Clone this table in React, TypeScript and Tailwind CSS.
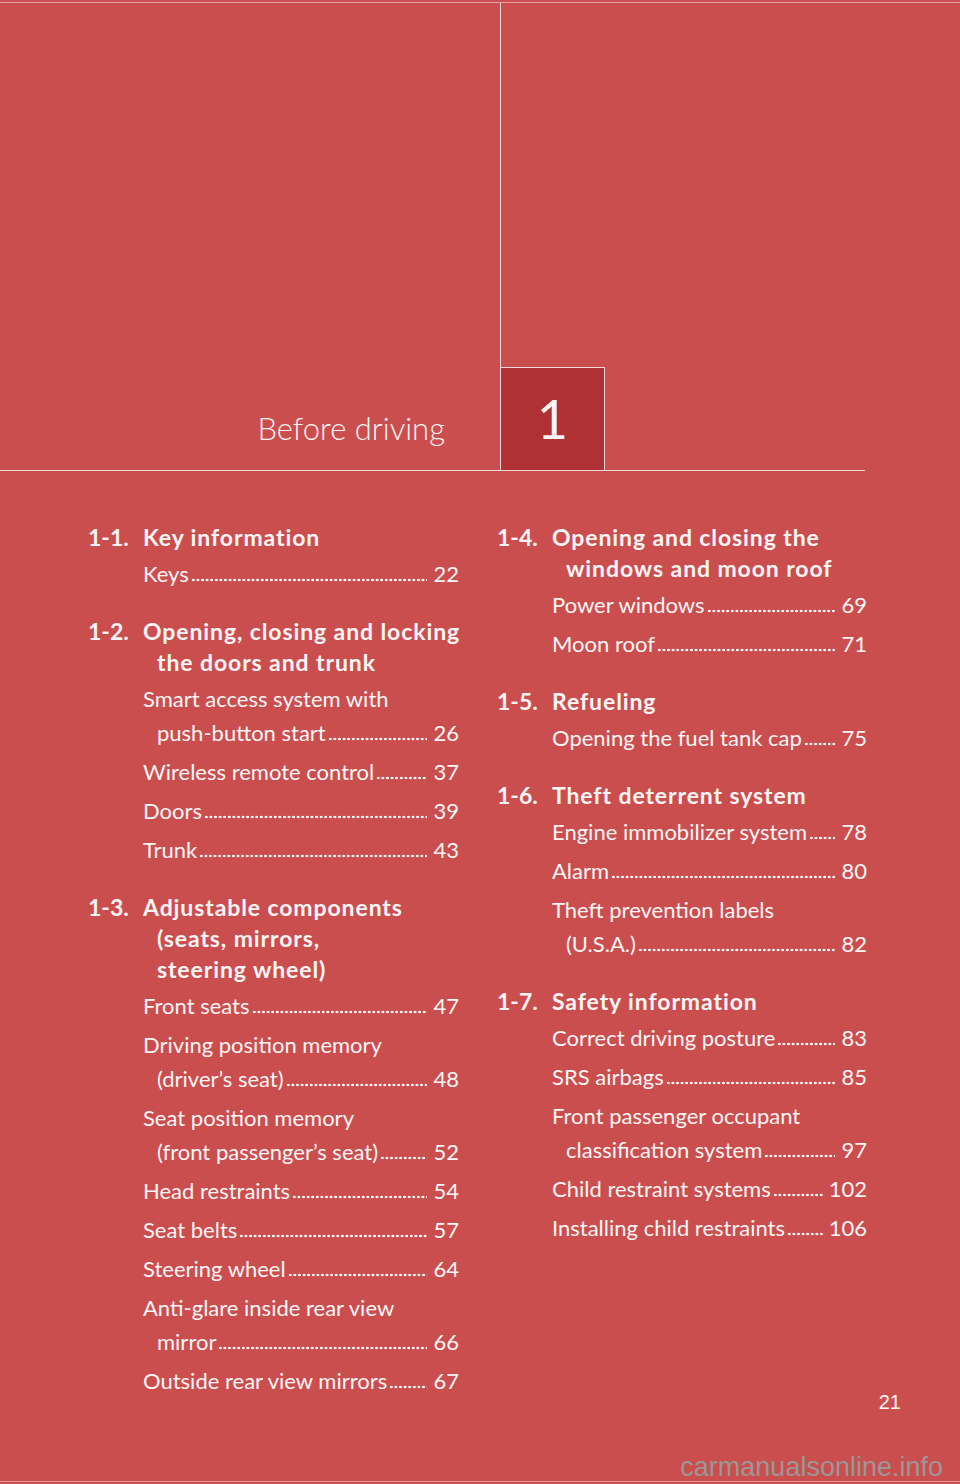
import React from 'react';

type Entry = { lines: string[]; page: string };
type Section = { num: string; title: string[]; entries: Entry[] };

const left: Section[] = [
  { num: '1-1.', title: ['Key information'], entries: [{ lines: ['Keys'], page: '22' }] },
  {
    num: '1-2.',
    title: ['Opening, closing and locking', 'the doors and trunk'],
    entries: [
      { lines: ['Smart access system with', 'push-button start'], page: '26' },
      { lines: ['Wireless remote control'], page: '37' },
      { lines: ['Doors'], page: '39' },
      { lines: ['Trunk'], page: '43' },
    ],
  },
  {
    num: '1-3.',
    title: ['Adjustable components', '(seats, mirrors,', 'steering wheel)'],
    entries: [
      { lines: ['Front seats'], page: '47' },
      { lines: ['Driving position memory', '(driver\u2019s seat)'], page: '48' },
      { lines: ['Seat position memory', '(front passenger\u2019s seat)'], page: '52' },
      { lines: ['Head restraints'], page: '54' },
      { lines: ['Seat belts'], page: '57' },
      { lines: ['Steering wheel'], page: '64' },
      { lines: ['Anti-glare inside rear view', 'mirror'], page: '66' },
      { lines: ['Outside rear view mirrors'], page: '67' },
    ],
  },
];

const right: Section[] = [
  {
    num: '1-4.',
    title: ['Opening and closing the', 'windows and moon roof'],
    entries: [
      { lines: ['Power windows'], page: '69' },
      { lines: ['Moon roof'], page: '71' },
    ],
  },
  { num: '1-5.', title: ['Refueling'], entries: [{ lines: ['Opening the fuel tank cap'], page: '75' }] },
  {
    num: '1-6.',
    title: ['Theft deterrent system'],
    entries: [
      { lines: ['Engine immobilizer system'], page: '78' },
      { lines: ['Alarm'], page: '80' },
      { lines: ['Theft prevention labels', '(U.S.A.)'], page: '82' },
    ],
  },
  {
    num: '1-7.',
    title: ['Safety information'],
    entries: [
      { lines: ['Correct driving posture'], page: '83' },
      { lines: ['SRS airbags'], page: '85' },
      { lines: ['Front passenger occupant', 'classification system'], page: '97' },
      { lines: ['Child restraint systems'], page: '102' },
      { lines: ['Installing child restraints'], page: '106' },
    ],
  },
];

function EntryRow({ e }: { e: Entry }) {
  const last = e.lines.length - 1;
  return (
    <div className="mt-[5px] first:mt-0">
      {e.lines.map((l, i) =>
        i < last ? (
          <div key={i} className="h-[34px] leading-[34px] whitespace-nowrap">
            {l}
          </div>
        ) : (
          <div key={i} className={`flex h-[34px] leading-[34px] ${i > 0 ? 'pl-[14px]' : ''}`}>
            <span className="whitespace-nowrap">{l}</span>
            <span className="flex-1 min-w-0 ml-[2px] bg-[radial-gradient(circle,#fdf5f5_1.1px,transparent_1.6px)] bg-[length:4.6px_4px] bg-repeat-x bg-[position:0_21px]" />
            <span className="whitespace-nowrap pl-[6px]">{e.page}</span>
          </div>
        )
      )}
    </div>
  );
}

function SectionBlock({ s }: { s: Section }) {
  return (
    <div className="mt-[25px] first:mt-0">
      <div className="flex font-bold leading-[31px] text-[23px] tracking-[0.9px]">
        <span className="w-[55px] shrink-0 tracking-normal">{s.num}</span>
        <div>
          {s.title.map((t, i) => (
            <div key={i} className={i > 0 ? 'pl-[14px] whitespace-nowrap' : 'whitespace-nowrap'}>
              {t}
            </div>
          ))}
        </div>
      </div>
      <div className="pl-[55px] mt-[4px]">
        {s.entries.map((e, i) => (
          <EntryRow key={i} e={e} />
        ))}
      </div>
    </div>
  );
}

export default function App() {
  return (
    <div className="w-[960px] h-[1484px] bg-[#cb4e4f] flex flex-col text-[#fdf5f5] [font-family:Lato,'Open_Sans',sans-serif] overflow-hidden">
      <div className="h-[2px] shrink-0" />
      <div className="h-px shrink-0 bg-[#e3a3a3]" />
      <div className="flex h-[467px] shrink-0">
        <div className="w-[500px] flex items-end justify-end pr-[55px] pb-[22px]">
          <span className="text-[31px] leading-[40px] font-light">Before driving</span>
        </div>
        <div className="w-px bg-[#f3d6d6]" />
        <div className="flex-1 flex items-end">
          <div className="w-[104px] h-[103px] bg-[#b03133] border-t border-r border-[#f3d6d6] flex items-center justify-center">
            <span className="text-[54px] leading-none font-normal">1</span>
          </div>
        </div>
      </div>
      <div className="w-[865px] h-px shrink-0 bg-[#f3d6d6]" />
      <div className="flex-1 min-h-0 grid grid-cols-[371px_370px] gap-x-[38px] pl-[88px] pt-[51px] text-[22px]">
        <div>
          {left.map((s, i) => (
            <SectionBlock key={i} s={s} />
          ))}
        </div>
        <div>
          {right.map((s, i) => (
            <SectionBlock key={i} s={s} />
          ))}
        </div>
      </div>
      <div className="shrink-0 flex justify-end pr-[59px] mb-[39px]">
        <span className="text-[20px] leading-[24px] [font-family:'Liberation_Sans',Arial,sans-serif]">21</span>
      </div>
      <div className="shrink-0 flex justify-end pr-[17px]">
        <span className="text-[27px] leading-[28px] text-[#9c9696] [font-family:'Liberation_Sans',Arial,sans-serif]">
          carmanualsonline.info
        </span>
      </div>
      <div className="h-px shrink-0 bg-[#e59a9a]" />
      <div className="h-[2px] shrink-0" />
    </div>
  );
}
